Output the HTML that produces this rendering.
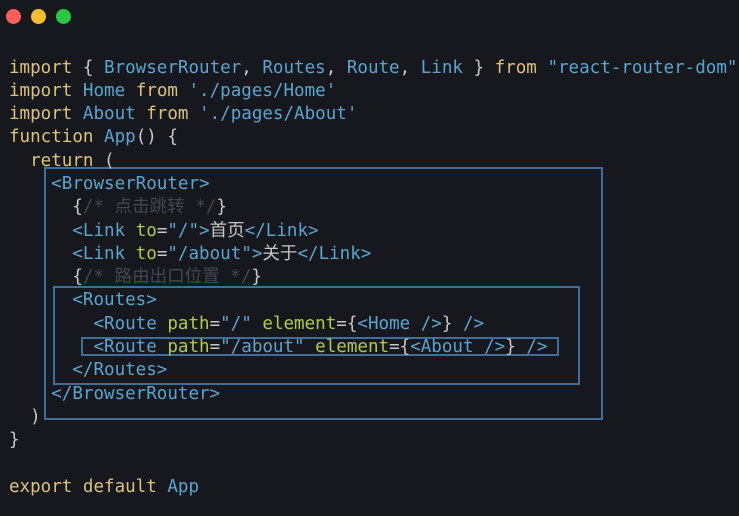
<!DOCTYPE html>
<html><head><meta charset="utf-8"><style>
html,body{margin:0;padding:0;width:739px;height:516px;overflow:hidden;background:#16181d;}
.dots{position:absolute;top:9px;left:6px}
.dot{position:absolute;top:0;width:15px;height:15px;border-radius:50%}
pre{position:absolute;left:9px;top:56.5px;margin:0;font-family:"DejaVu Sans Mono","Noto Sans CJK SC",monospace;font-size:17.55px;line-height:23.3px;color:#c8c8c8;white-space:pre}
.k{color:#dcc27a}.b{color:#58a6d0}.g{color:#b3c947}.c{color:#46474b}.p{color:#c8c8c8}
.box{position:absolute;border:2px solid #3c6e9e;box-sizing:border-box}
</style></head><body>
<div class="dots"><div class="dot" style="left:0;background:#fe5f57"></div><div class="dot" style="left:25px;background:#febc2e"></div><div class="dot" style="left:50px;background:#28c840"></div></div>
<div class="box" style="left:44px;top:167px;width:559px;height:253px"></div>
<div class="box" style="left:53px;top:286px;width:527px;height:99px"></div>
<div class="box" style="left:81px;top:337px;width:478px;height:19px"></div>
<pre><span class="k">import</span> { <span class="b">BrowserRouter</span>, <span class="b">Routes</span>, <span class="b">Route</span>, <span class="b">Link</span> } <span class="k">from</span> <span class="b">"react-router-dom"</span>
<span class="k">import</span> <span class="b">Home</span> <span class="k">from</span> <span class="b">'./pages/Home'</span>
<span class="k">import</span> <span class="b">About</span> <span class="k">from</span> <span class="b">'./pages/About'</span>
<span class="k">function</span> <span class="b">App</span>() {
  <span class="k">return</span> (
    <span class="b">&lt;BrowserRouter&gt;</span>
      {<span class="c">/* 点击跳转 */</span>}
      <span class="b">&lt;Link</span> <span class="g">to</span>=<span class="b">"/"</span><span class="b">&gt;</span>首页<span class="b">&lt;/Link&gt;</span>
      <span class="b">&lt;Link</span> <span class="g">to</span>=<span class="b">"/about"</span><span class="b">&gt;</span>关于<span class="b">&lt;/Link&gt;</span>
      {<span class="c">/* 路由出口位置 */</span>}
      <span class="b">&lt;Routes&gt;</span>
        <span class="b">&lt;Route</span> <span class="g">path</span>=<span class="b">"/"</span> <span class="g">element</span>={<span class="b">&lt;Home /&gt;</span>} <span class="b">/&gt;</span>
        <span class="b">&lt;Route</span> <span class="g">path</span>=<span class="b">"/about"</span> <span class="g">element</span>={<span class="b">&lt;About /&gt;</span>} <span class="b">/&gt;</span>
      <span class="b">&lt;/Routes&gt;</span>
    <span class="b">&lt;/BrowserRouter&gt;</span>
  )
}

<span class="k">export</span> <span class="k">default</span> <span class="b">App</span></pre>
</body></html>
